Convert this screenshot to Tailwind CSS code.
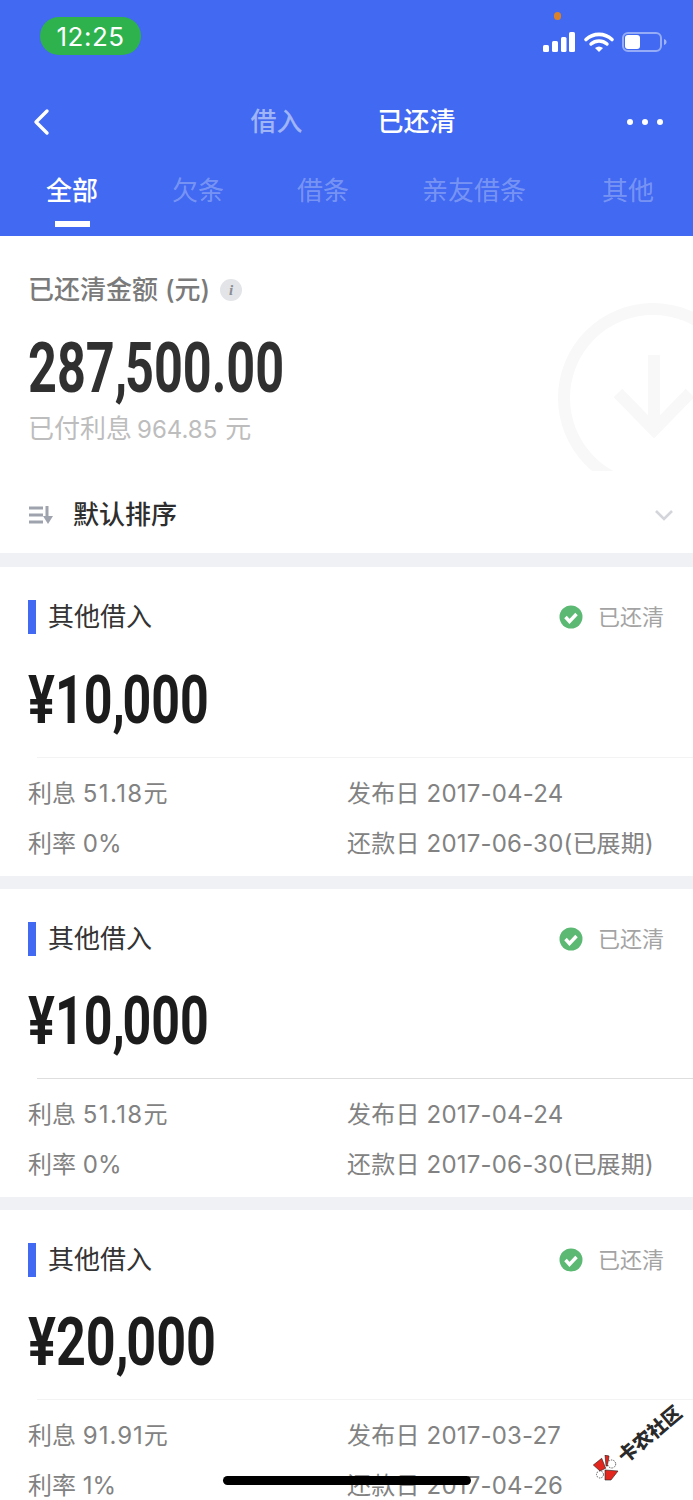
<!DOCTYPE html>
<html lang="zh">
<head>
  <meta charset="UTF-8" />
  <title>已还清</title>
  <script src="https://cdn.jsdelivr.net/npm/@tailwindcss/browser@4"></script>
</head>
<body class="bg-white">
  <div class="relative w-[693px] h-[1500px] overflow-hidden bg-[#f0f1f5] font-['Inter','Noto_Sans_CJK_SC',sans-serif]">

    <!-- Header -->
    <header class="bg-[#4169f1] h-[236px] flex flex-col text-white">
      <div class="relative h-[82px] shrink-0">
        <div class="absolute left-[40px] top-[17px] w-[101px] h-[38px] rounded-full bg-[#2db24e] flex items-center justify-center text-[26px] tracking-[0.5px]">12:25</div>
        <div class="absolute left-[554px] top-[12px] w-[7px] h-[8px] rounded-full bg-[#d9822b]"></div>
        <svg class="absolute left-[543px] top-[30px]" width="126" height="24" viewBox="0 0 126 24" fill="none">
          <rect x="0" y="15" width="6" height="7" rx="1.5" fill="#fff"/>
          <rect x="9" y="11" width="6" height="11" rx="1.5" fill="#fff"/>
          <rect x="18" y="7" width="5.500" height="15" rx="1.500" fill="#fff"/>
          <rect x="26" y="2" width="6" height="20" rx="1.500" fill="#fff"/>
          <path d="M43 9.500a19 19 0 0 1 26 0" stroke="#fff" stroke-width="3.600" stroke-linecap="round"/>
          <path d="M48 14a12 12 0 0 1 16 0" stroke="#fff" stroke-width="3.400" stroke-linecap="round"/>
          <path d="M52 18a6.500 6.500 0 0 1 8 0l-4 4z" fill="#fff"/>
          <rect x="80" y="3" width="38" height="18" rx="5" stroke="#fff" stroke-opacity="0.45" stroke-width="2"/>
          <rect x="82" y="5" width="15" height="14" rx="3" fill="#fff"/>
          <path d="M121 9c1.800.5 2.500 1.700 2.500 3s-.7 2.500-2.500 3z" fill="#fff" fill-opacity="0.5"/>
        </svg>
      </div>
      <div class="relative h-[80px] shrink-0 flex items-center justify-center gap-[75px] text-[26px] leading-none pl-[13px]">
        <svg class="absolute left-[32px] top-[26px]" width="18" height="28" viewBox="0 0 18 28" fill="none">
          <path d="M15 3 4 14l11 11" stroke="#fff" stroke-width="3.400" stroke-linecap="round" stroke-linejoin="round"/>
        </svg>
        <span class="text-white/50 font-medium">借入</span>
        <span class="font-medium">已还清</span>
        <div class="absolute left-[627px] top-[37px] flex gap-[9px]">
          <span class="w-[6px] h-[6px] rounded-full bg-white"></span>
          <span class="w-[6px] h-[6px] rounded-full bg-white"></span>
          <span class="w-[6px] h-[6px] rounded-full bg-white"></span>
        </div>
      </div>
      <nav class="relative flex-1 text-[26px] leading-none">
        <div class="flex pl-[46px] pt-[16px] text-white/30">
          <span class="w-[126px] text-white font-medium">全部</span>
          <span class="w-[125px]">欠条</span>
          <span class="w-[125px]">借条</span>
          <span class="w-[180px]">亲友借条</span>
          <span>其他</span>
        </div>
        <div class="absolute left-[55px] top-[59px] w-[35px] h-[6px] bg-white"></div>
      </nav>
    </header>

    <!-- Summary -->
    <section class="relative bg-white h-[317px] overflow-hidden px-[28px]">
      <svg class="absolute left-[556px] top-[66px]" width="137" height="169" viewBox="0 0 137 169" fill="none">
        <circle cx="97" cy="96" r="89" stroke="#f8f8f8" stroke-width="12"/>
        <path d="M98 53v75M62 91l36 37 36-37" stroke="#f8f8f8" stroke-width="12"/>
      </svg>
      <div class="relative pt-[38px] h-[32px] box-content flex items-center text-[26px] leading-none font-medium text-[#7a7a7a]">
        已还清金额 (元)
        <span class="ml-[10px] w-[22px] h-[22px] rounded-full bg-[#e3e4e8] flex items-center justify-center text-[15px] italic font-bold text-[#8b8d94] font-['Liberation_Serif',serif]">i</span>
      </div>
      <div class="relative mt-[24px] h-[76px] flex items-center">
        <span class="inline-block origin-left scale-x-[.72] text-[70px] leading-none font-bold font-['Roboto',sans-serif] text-[#303030] whitespace-nowrap">287<span class="tracking-[-3px]">,</span>500.00</span>
      </div>
      <div class="relative mt-[6px] text-[26px] leading-[34px] text-[#bdbdbd]">已付利息<span class="ml-[5px] mr-[8px] text-[24px]">964.85</span>元</div>
      <div class="absolute left-[28px] right-[28px] top-[261px] h-[36px] flex items-center">
        <svg width="26" height="20" viewBox="0 0 26 20" fill="none">
          <path d="M1 3h14M1 10h14M1 17h14" stroke="#9ea3ae" stroke-width="3"/>
          <path d="M19 1v12" stroke="#9ea3ae" stroke-width="3"/>
          <path d="M15 11h10l-5 8z" fill="#9ea3ae"/>
        </svg>
        <span class="ml-[19px] text-[26px] leading-none font-medium text-[#2e2e2e]">默认排序</span>
        <svg class="absolute left-[626px] top-[12px]" width="20" height="12" viewBox="0 0 20 12" fill="none">
          <path d="M2 2l8 8 8-8" stroke="#d3d5da" stroke-width="2.600"/>
        </svg>
      </div>
    </section>

    <!-- Loan cards -->
    <main class="mt-[14px] flex flex-col gap-[13px]">
      <article class="bg-white h-[309px] pt-[33px]">
        <div class="pl-[28px] pr-[29px] h-[34px] flex items-center">
          <span class="w-[8px] h-[34px] bg-[#4169f1]"></span>
          <span class="ml-[12px] text-[26px] leading-none text-[#333]">其他借入</span>
          <svg class="ml-auto" width="24" height="24" viewBox="0 0 24 24" fill="none">
            <circle cx="12" cy="12" r="11.500" fill="#5cb974"/>
            <path d="M6.500 12l4 4.500 7-7.500" stroke="#fff" stroke-width="3.400"/>
          </svg>
          <span class="ml-[15px] text-[22px] leading-none text-[#a3a3a3]">已还清</span>
        </div>
        <div class="h-[123px] pl-[28px] pt-[10px] flex items-center">
          <span class="inline-block origin-left scale-x-[.76] text-[66px] leading-none font-bold font-['Roboto',sans-serif] text-[#1c1c1c]">¥10<span class="tracking-[-3px]">,</span>000</span>
        </div>
        <div class="ml-[37px] h-px bg-[#f3f3f3]"></div>
        <div class="pt-[11px] pl-[28px] grid grid-cols-[319px_1fr] auto-rows-[50px] items-center text-[24px] leading-none text-[#828282] whitespace-nowrap">
          <span>利息 <span class="tracking-[1.400px]">51.18</span>元</span><span class="tracking-[.2px]">发布日 2017-04-24</span>
          <span>利率 0%</span><span class="tracking-[.2px]">还款日 2017-06-30(已展期)</span>
        </div>
      </article>

      <article class="bg-white h-[308px] pt-[33px]">
        <div class="pl-[28px] pr-[29px] h-[34px] flex items-center">
          <span class="w-[8px] h-[34px] bg-[#4169f1]"></span>
          <span class="ml-[12px] text-[26px] leading-none text-[#333]">其他借入</span>
          <svg class="ml-auto" width="24" height="24" viewBox="0 0 24 24" fill="none">
            <circle cx="12" cy="12" r="11.500" fill="#5cb974"/>
            <path d="M6.500 12l4 4.500 7-7.500" stroke="#fff" stroke-width="3.400"/>
          </svg>
          <span class="ml-[15px] text-[22px] leading-none text-[#a3a3a3]">已还清</span>
        </div>
        <div class="h-[122px] pl-[28px] pt-[10px] flex items-center">
          <span class="inline-block origin-left scale-x-[.76] text-[66px] leading-none font-bold font-['Roboto',sans-serif] text-[#1c1c1c]">¥10<span class="tracking-[-3px]">,</span>000</span>
        </div>
        <div class="ml-[37px] h-px bg-[#dedede]"></div>
        <div class="pt-[11px] pl-[28px] grid grid-cols-[319px_1fr] auto-rows-[50px] items-center text-[24px] leading-none text-[#828282] whitespace-nowrap">
          <span>利息 <span class="tracking-[1.400px]">51.18</span>元</span><span class="tracking-[.2px]">发布日 2017-04-24</span>
          <span>利率 0%</span><span class="tracking-[.2px]">还款日 2017-06-30(已展期)</span>
        </div>
      </article>

      <article class="bg-white h-[308px] pt-[33px]">
        <div class="pl-[28px] pr-[29px] h-[34px] flex items-center">
          <span class="w-[8px] h-[34px] bg-[#4169f1]"></span>
          <span class="ml-[12px] text-[26px] leading-none text-[#333]">其他借入</span>
          <svg class="ml-auto" width="24" height="24" viewBox="0 0 24 24" fill="none">
            <circle cx="12" cy="12" r="11.500" fill="#5cb974"/>
            <path d="M6.500 12l4 4.500 7-7.500" stroke="#fff" stroke-width="3.400"/>
          </svg>
          <span class="ml-[15px] text-[22px] leading-none text-[#a3a3a3]">已还清</span>
        </div>
        <div class="h-[122px] pl-[28px] pt-[10px] flex items-center">
          <span class="inline-block origin-left scale-x-[.79] text-[66px] leading-none font-bold font-['Roboto',sans-serif] text-[#1c1c1c]">¥20<span class="tracking-[-3px]">,</span>000</span>
        </div>
        <div class="ml-[37px] h-px bg-[#f3f3f3]"></div>
        <div class="pt-[11px] pl-[28px] grid grid-cols-[319px_1fr] auto-rows-[50px] items-center text-[24px] leading-none text-[#828282] whitespace-nowrap">
          <span>利息 <span class="tracking-[1px]">91.91</span>元</span><span class="tracking-[.2px]">发布日 2017-03-27</span>
          <span>利率 1%</span><span class="tracking-[.2px]">还款日 2017-04-26</span>
        </div>
      </article>
    </main>

    <!-- Home indicator -->
    <div class="absolute left-[223px] top-[1476px] w-[248px] h-[9px] rounded-full bg-black"></div>

    <!-- Watermark -->
    <svg class="absolute left-[593px] top-[1455px]" width="26" height="26" viewBox="0 0 26 26">
      <path d="M.3 10 8.700 3.300 12.700 13.300 7 16z" fill="#e3261d" stroke="#222" stroke-width=".6"/>
      <path d="M12 0 16 1 14.700 11 13 11z" fill="#e3261d" stroke="#222" stroke-width=".6"/>
      <path d="M12 15 25 16 18 25 12 25z" fill="#e3261d" stroke="#222" stroke-width=".6"/>
      <circle cx="7" cy="19.500" r="3.500" fill="#fff" stroke="#222" stroke-width=".7" stroke-dasharray="1.500 1"/>
      <circle cx="18.700" cy="9" r="4" fill="#fff" stroke="#222" stroke-width=".7" stroke-dasharray="1.500 1"/>
    </svg>
    <span class="absolute left-[612px] top-[1425px] rotate-[-40deg] text-[19px] leading-none font-black text-[#2a2a2a] whitespace-nowrap">卡农社区</span>
  </div>
</body>
</html>
